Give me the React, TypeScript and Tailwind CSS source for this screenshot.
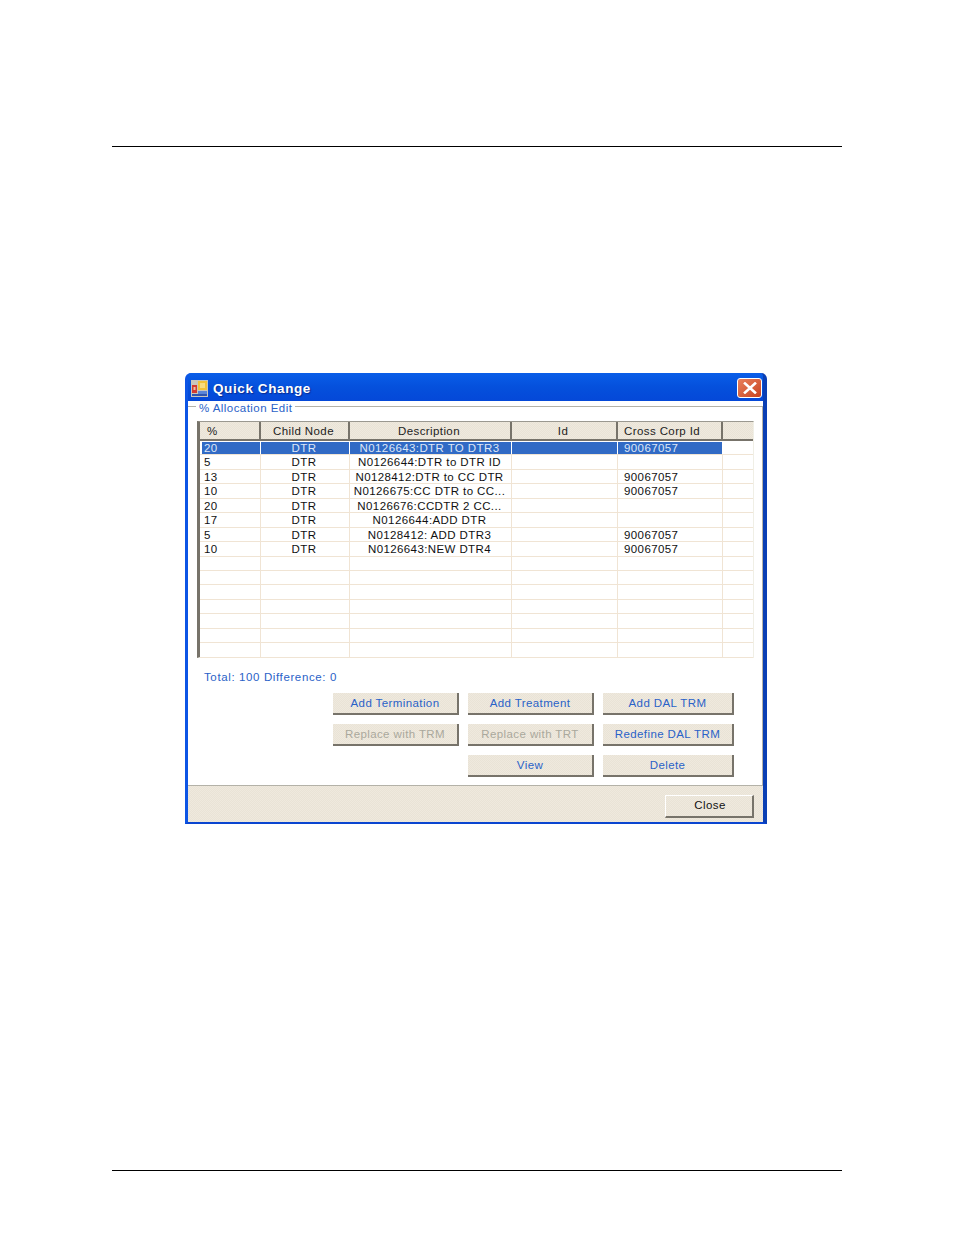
import React from "react";

const columns = [
  { label: "%", width: "w-[61px]", align: "text-left pl-[4px]", head: "text-left pl-[7px]" },
  { label: "Child Node", width: "w-[89px]", align: "text-center pr-[2px]", head: "text-center pr-[2px]" },
  { label: "Description", width: "w-[162px]", align: "text-center pr-[2px]", head: "text-center pr-[2px]" },
  { label: "Id", width: "w-[106px]", align: "text-center pr-[2px]", head: "text-center pr-[2px]" },
  { label: "Cross Corp Id", width: "w-[105px]", align: "text-left pl-[6px]", head: "text-left pl-[6px]" },
];

const rows = [
  ["20", "DTR", "N0126643:DTR TO DTR3", "", "90067057"],
  ["5", "DTR", "N0126644:DTR to DTR ID", "", ""],
  ["13", "DTR", "N0128412:DTR to CC DTR", "", "90067057"],
  ["10", "DTR", "N0126675:CC DTR to CC...", "", "90067057"],
  ["20", "DTR", "N0126676:CCDTR 2 CC...", "", ""],
  ["17", "DTR", "N0126644:ADD DTR", "", ""],
  ["5", "DTR", "N0128412: ADD DTR3", "", "90067057"],
  ["10", "DTR", "N0126643:NEW DTR4", "", "90067057"],
  ["", "", "", "", ""],
  ["", "", "", "", ""],
  ["", "", "", "", ""],
  ["", "", "", "", ""],
  ["", "", "", "", ""],
  ["", "", "", "", ""],
  ["", "", "", "", ""],
];

const XpButton = ({ label, disabled, width = "w-[126px]" }: { label: string; disabled?: boolean; width?: string }) => (
  <div
    className={`${width} h-[22px] flex items-center justify-center pt-px bg-[repeating-conic-gradient(#e9e3d6_0_25%,#efe9de_0_50%)] bg-[length:2px_2px] border-r-2 border-b-2 border-[#77736a] text-[11.5px] tracking-[0.4px] ${
      disabled ? "text-[#aaa89c]" : "text-[#2a62c8]"
    }`}
  >
    {label}
  </div>
);

export default function App() {
  return (
    <div
      className="w-[954px] h-[1235px] bg-white flex flex-col pt-[146px] px-[112px]"
      style={{ fontFamily: '"Liberation Sans", Arial, sans-serif' }}
    >
      <div className="h-px bg-black shrink-0" />

      <div className="h-[226px] shrink-0" />

      {/* dialog */}
      <div className="ml-[73px] w-[582px] h-[451px] shrink-0 flex flex-col bg-[#0a50e0] rounded-t-[6px] border-b-2 border-l-[3px] border-r-[4px] border-b-[#0a45d0] border-l-[#0d55e5] border-r-[#0a3fb4]">
        <div className="h-[28px] flex items-center pl-[3px] pr-px bg-gradient-to-b from-[#0a5ee8] via-[#0550dc] to-[#0548d8] rounded-t-[4px]">
          <svg width="17" height="17" viewBox="0 0 17 17" className="shrink-0 mt-[3px]">
            <rect x="0" y="0" width="17" height="17" fill="#c9c6bc" />
            <rect x="1" y="5" width="5" height="8" fill="#d23a30" />
            <rect x="2.5" y="7" width="2" height="3" fill="#f0c0a0" />
            <rect x="7" y="1" width="9" height="9" fill="#f2c23a" />
            <rect x="9" y="3" width="5" height="5" fill="#f8dc80" />
            <rect x="7" y="11" width="9" height="4" fill="#5a86d8" />
            <rect x="1" y="14" width="15" height="2" fill="#2f55b0" />
          </svg>
          <span className="ml-[5px] mt-[4px] text-white font-bold text-[13.5px] tracking-[0.6px] [text-shadow:1px_1px_1px_#0a2a90]">
            Quick Change
          </span>
          <div className="ml-auto mt-[2px] w-[25px] h-[20px] rounded-[3px] bg-gradient-to-br from-[#e8805c] to-[#c8421e] border border-white flex items-center justify-center">
            <svg width="14" height="12" viewBox="0 0 14 12">
              <path d="M2 1.5 L12 10.5 M12 1.5 L2 10.5" stroke="#fff" strokeWidth="2.6" strokeLinecap="square" />
            </svg>
          </div>
        </div>

        <div className="flex-1 flex flex-col bg-white">
          {/* group box */}
          <div className="relative h-[384px] flex flex-col pt-[20px] pl-[9px]">
            <div className="absolute left-0 right-0 top-[5px] h-px bg-[#b4b2a8]" />
            <div className="absolute right-0 top-[5px] bottom-0 w-px bg-[#b4b2a8]" />
            <span className="absolute left-[8px] top-px bg-white px-[3px] text-[11.5px] leading-[13px] tracking-[0.45px] text-[#2a62c8]">
              % Allocation Edit
            </span>

            {/* grid */}
            <div className="w-[557px] h-[237px] flex flex-col bg-white border-l-[3px] border-t border-r border-b border-l-[#77736a] border-t-[#9a9890] border-r-[#f0efe6] border-b-[#f0efe6]">
              <div className="h-[19px] flex shrink-0 border-b-2 border-[#77736a] text-[11.5px] tracking-[0.4px] text-[#222] leading-[19px]">
                {columns.map((c) => (
                  <div
                    key={c.label}
                    className={`${c.width} ${c.head} bg-[repeating-conic-gradient(#e9e3d6_0_25%,#efe9de_0_50%)] bg-[length:2px_2px] border-r-2 border-[#77736a]`}
                  >
                    {c.label}
                  </div>
                ))}
                <div className="flex-1 bg-[repeating-conic-gradient(#e9e3d6_0_25%,#efe9de_0_50%)] bg-[length:2px_2px]" />
              </div>
              <div className="flex-1 flex flex-col bg-white">
                {rows.map((row, i) => (
                  <div key={i} className="h-[14.44px] flex border-b border-[#f0e4d4] text-[11.5px] tracking-[0.4px] text-[#111] leading-[14px]">
                    {row.map((cell, j) => (
                      <div
                        key={j}
                        className={`${columns[j].width} ${
                          i === 0 && j === 0 ? "text-left pl-[2px] border-l-2 border-l-white" : columns[j].align
                        } border-r whitespace-nowrap overflow-hidden ${
                          i === 0
                            ? "bg-[#316ac5] text-[#dde6f6] border-t border-t-white border-r-white leading-[12px]"
                            : "border-[#f0e4d4]"
                        }`}
                      >
                        {cell}
                      </div>
                    ))}
                    <div className="flex-1" />
                  </div>
                ))}
              </div>
            </div>

            <div className="mt-[12px] ml-[7px] text-[11.5px] leading-[14px] tracking-[0.62px] text-[#2a62c8]">
              Total: 100 Difference: 0
            </div>

            <div className="mt-[9px] ml-[136px] grid grid-cols-[126px_126px_131px] gap-x-[9px] gap-y-[9px]">
              <XpButton label="Add Termination" />
              <XpButton label="Add Treatment" />
              <XpButton label="Add DAL TRM" width="w-[131px]" />
              <XpButton label="Replace with TRM" disabled />
              <XpButton label="Replace with TRT" disabled />
              <XpButton label="Redefine DAL TRM" width="w-[131px]" />
              <div />
              <XpButton label="View" />
              <XpButton label="Delete" width="w-[131px]" />
            </div>
          </div>

          {/* footer */}
          <div className="flex-1 flex items-start justify-end bg-[repeating-conic-gradient(#e9e3d6_0_25%,#efe9de_0_50%)] bg-[length:2px_2px] border-t border-[#b4b2a8] pt-[9px] pr-[9px]">
            <div className="w-[89px] h-[23px] flex items-center justify-center pl-[2px] border-t border-l border-t-white border-l-white border-r-2 border-b-2 border-r-[#77736a] border-b-[#77736a] text-[11.5px] tracking-[0.4px] text-[#111]">
              Close
            </div>
          </div>
        </div>
      </div>

      <div className="h-[346px] shrink-0" />
      <div className="h-px bg-black shrink-0" />
    </div>
  );
}
